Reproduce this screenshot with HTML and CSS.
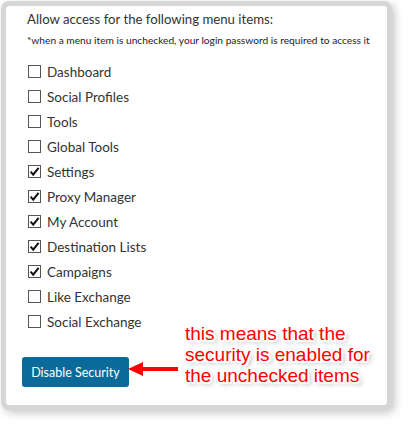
FILE: index.html
```html
<!DOCTYPE html>
<html>
<head>
<meta charset="utf-8">
<link rel="stylesheet" href="styles.css">
</head>
<body>
<div class="page">
  <div class="panel">
    <div class="title">Allow access for the following menu items:</div>
    <div class="note">*when a menu item is unchecked, your login password is required to access it</div>
    <ul class="items">
      <li class="item"><span class="box"></span><span class="label">Dashboard</span></li>
      <li class="item"><span class="box"></span><span class="label">Social Profiles</span></li>
      <li class="item"><span class="box"></span><span class="label">Tools</span></li>
      <li class="item"><span class="box"></span><span class="label">Global Tools</span></li>
      <li class="item"><span class="box checked"><svg viewBox="0 0 11 11" width="11" height="11"><path d="M1.6 5.6 L4.2 8.6 L9.6 1.8" fill="none" stroke="#111" stroke-width="2"/></svg></span><span class="label">Settings</span></li>
      <li class="item"><span class="box checked"><svg viewBox="0 0 11 11" width="11" height="11"><path d="M1.6 5.6 L4.2 8.6 L9.6 1.8" fill="none" stroke="#111" stroke-width="2"/></svg></span><span class="label">Proxy Manager</span></li>
      <li class="item"><span class="box checked"><svg viewBox="0 0 11 11" width="11" height="11"><path d="M1.6 5.6 L4.2 8.6 L9.6 1.8" fill="none" stroke="#111" stroke-width="2"/></svg></span><span class="label">My Account</span></li>
      <li class="item"><span class="box checked"><svg viewBox="0 0 11 11" width="11" height="11"><path d="M1.6 5.6 L4.2 8.6 L9.6 1.8" fill="none" stroke="#111" stroke-width="2"/></svg></span><span class="label">Destination Lists</span></li>
      <li class="item"><span class="box checked"><svg viewBox="0 0 11 11" width="11" height="11"><path d="M1.6 5.6 L4.2 8.6 L9.6 1.8" fill="none" stroke="#111" stroke-width="2"/></svg></span><span class="label">Campaigns</span></li>
      <li class="item"><span class="box"></span><span class="label">Like Exchange</span></li>
      <li class="item"><span class="box"></span><span class="label">Social Exchange</span></li>
    </ul>
    <button class="btn">Disable Security</button>
  </div>
  <svg class="arrow" width="52" height="18" viewBox="0 0 52 18">
    <polygon points="0,8 15,1 15,15" fill="#ff0000"/>
    <rect x="13" y="6" width="37" height="4" fill="#ff0000"/>
  </svg>
  <div class="callout">this means that the<br>security is enabled for<br>the unchecked items</div>
</div>
</body>
</html>
```
FILE: styles.css
```css
* { box-sizing: border-box; }
html, body { margin: 0; padding: 0; background: #fff; }
.page {
  position: relative;
  width: 409px;
  height: 428px;
  padding: 1px;
  font-family: Lato, "Open Sans", sans-serif;
  color: #333;
}
.panel {
  width: 391px;
  height: 409px;
  border: 5px solid #d6d6d6;
  border-radius: 8px;
  background: #fff;
  box-shadow: 3px 3px 9px rgba(0,0,0,0.22);
  padding: 4px 0 0 21px;
}
.title {
  font-size: 13.2px;
  line-height: 18px;
  color: #333;
}
.note {
  margin-top: 5px;
  font-size: 10.2px;
  line-height: 14px;
  color: #222;
}
.items {
  list-style: none;
  margin: 12px 0 0 0;
  padding: 0;
  display: flex;
  flex-direction: column;
}
.item {
  height: 25px;
  display: flex;
  align-items: center;
  gap: 6px;
  padding-left: 1px;
}
.box {
  width: 13px;
  height: 13px;
  border: 1px solid #555;
  background: #fff;
  display: flex;
  align-items: center;
  justify-content: center;
  flex: none;
}
.label {
  font-size: 13.5px;
  line-height: 18px;
  color: #333;
}
.btn {
  margin: 23px 0 0 -5px;
  width: 107px;
  height: 30px;
  border: none;
  border-radius: 3px;
  background: #0a6a99;
  color: #fff;
  font-family: Lato, "Open Sans", sans-serif;
  font-size: 12.5px;
  padding: 0;
}
.arrow {
  position: absolute;
  left: 128px;
  top: 361px;
}
.callout {
  position: absolute;
  left: 185px;
  top: 323px;
  font-family: "Liberation Sans", Arial, sans-serif;
  font-size: 19px;
  line-height: 21px;
  color: #ff0000;
  white-space: nowrap;
  text-shadow:
    2px 0 0 #fff, -2px 0 0 #fff, 0 2px 0 #fff, 0 -2px 0 #fff,
    1.5px 1.5px 0 #fff, -1.5px 1.5px 0 #fff, 1.5px -1.5px 0 #fff, -1.5px -1.5px 0 #fff,
    3px 3px 4px rgba(0,0,0,0.35);
}
```
